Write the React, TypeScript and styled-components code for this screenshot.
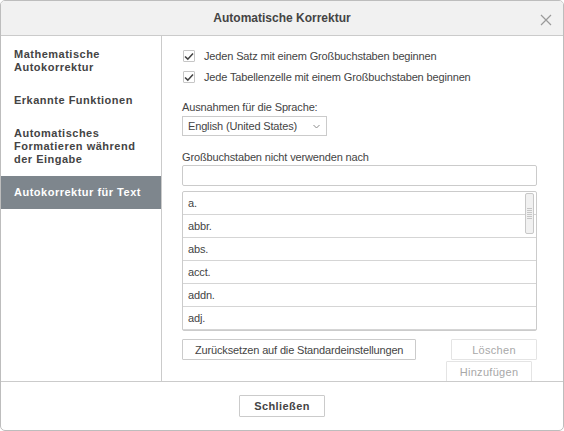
import React from 'react';
import styled, { createGlobalStyle, css } from 'styled-components';

const GlobalStyle = createGlobalStyle`
  html, body {
    margin: 0;
    padding: 0;
    background: #ffffff;
  }
  body {
    font-family: 'Liberation Sans', Arial, sans-serif;
    color: #444444;
  }
  * {
    box-sizing: border-box;
  }
`;

interface NavItemI {
  active?: boolean;
}

interface ButtonI {
  disabled?: boolean;
  shift?: number;
}

const Dialog = styled.div`
  display: flex;
  flex-direction: column;
  width: 564px;
  height: 431px;
  border: 1px solid #bdbdbd;
  border-radius: 5px;
  overflow: hidden;
  background: #ffffff;
`;

const Header = styled.header`
  position: relative;
  display: flex;
  height: 35px;
  flex-shrink: 0;
  align-items: center;
  justify-content: center;
  background: #f1f1f1;
  border-bottom: 1px solid #cbcbcb;
  font-size: 12px;
  font-weight: bold;
  color: #444444;
`;

const CloseButton = styled.span`
  position: absolute;
  right: 11px;
  top: 13px;
  width: 12px;
  height: 12px;
  display: flex;
`;

const Body = styled.div`
  display: flex;
  flex: 1;
  min-height: 0;
`;

const Sidebar = styled.nav`
  width: 161px;
  flex-shrink: 0;
  padding-top: 2px;
  border-right: 1px solid #cbcbcb;
`;

const NavItem = styled.div<NavItemI>`
  padding: 10px 13px;
  font-size: 11px;
  font-weight: bold;
  line-height: 13px;
  letter-spacing: 0.5px;
  color: #444444;
  ${({ active }) => (active && css`
    background: #7e868d;
    color: #ffffff;
  `)}
`;

const Main = styled.section`
  flex: 1;
  display: flex;
  flex-direction: column;
  padding: 12px 26px 0 20px;
  overflow: hidden;
  letter-spacing: -0.15px;
  & > * {
    flex-shrink: 0;
  }
`;

const CheckRow = styled.label`
  display: flex;
  align-items: center;
  height: 16px;
  font-size: 11px;
  margin-bottom: 5px;
`;

const CheckBox = styled.span`
  display: flex;
  width: 12px;
  height: 12px;
  margin: 0 9px 0 1px;
  border: 1px solid #c6c6c6;
  border-radius: 1px;
  align-items: center;
  justify-content: center;
`;

const FieldLabel = styled.div<{ top: number }>`
  font-size: 11px;
  line-height: 14px;
  margin-top: ${({ top }) => top}px;
`;

const Dropdown = styled.div`
  display: flex;
  width: 145px;
  height: 20px;
  margin-top: 2px;
  padding: 0 6px 0 5px;
  border: 1px solid #cbcbcb;
  align-items: center;
  justify-content: space-between;
  font-size: 11px;
`;

const TextInput = styled.div`
  height: 21px;
  margin-top: 1px;
  border: 1px solid #cbcbcb;
  border-radius: 2px;
`;

const List = styled.div`
  position: relative;
  margin-top: 5px;
  border: 1px solid #cbcbcb;
  border-radius: 2px;
`;

const ListRow = styled.div`
  height: 23px;
  padding-left: 5px;
  display: flex;
  align-items: center;
  font-size: 11px;
  border-bottom: 1px solid #d5d5d5;
  &:last-of-type {
    height: 22px;
    border-bottom: none;
  }
`;

const ScrollThumb = styled.div`
  position: absolute;
  right: 2px;
  top: 1px;
  width: 9px;
  height: 41px;
  display: flex;
  flex-direction: column;
  align-items: center;
  justify-content: center;
  gap: 1px;
  background: #f1f1f1;
  border: 1px solid #c8c8c8;
  border-radius: 2px;
  span {
    width: 5px;
    height: 1px;
    background: #c6c6c6;
  }
`;

const Actions = styled.div`
  display: flex;
  margin-top: 8px;
  justify-content: space-between;
  align-items: flex-start;
`;

const ActionColumn = styled.div`
  display: flex;
  flex-direction: column;
  align-items: flex-end;
  gap: 1px;
`;

const Button = styled.button<ButtonI>`
  height: 21px;
  padding: 0 12px;
  flex-shrink: 0;
  background: #ffffff;
  border: 1px solid #cbcbcb;
  border-radius: 1px;
  font-family: 'Liberation Sans', Arial, sans-serif;
  font-size: 11px;
  letter-spacing: -0.15px;
  color: #444444;
  ${({ disabled }) => (disabled && css`
    width: 86px;
    border-color: #e4e4e4;
    color: #a8a8a8;
    letter-spacing: 0.3px;
  `)}
  ${({ shift }) => (shift && css`
    margin-right: ${shift}px;
  `)}
`;

const Footer = styled.footer`
  display: flex;
  height: 49px;
  flex-shrink: 0;
  align-items: center;
  justify-content: center;
  border-top: 1px solid #cbcbcb;
`;

const CloseDialogButton = styled(Button)`
  width: 86px;
  height: 22px;
  font-weight: bold;
  letter-spacing: 0.4px;
`;

const Check = () => (
  <svg width="10" height="9" viewBox="0 0 10 9">
    <path d="M1 4.5 L3.8 7.2 L9 1.5" fill="none" stroke="#444" strokeWidth="1.6" />
  </svg>
);

const words = ['a.', 'abbr.', 'abs.', 'acct.', 'addn.', 'adj.'];

export default function App() {
  return (
    <>
      <GlobalStyle />
      <Dialog>
        <Header>
          Automatische Korrektur
          <CloseButton>
            <svg width="12" height="12" viewBox="0 0 12 12">
              <path d="M1 1 L11 11 M11 1 L1 11" stroke="#9a9a9a" strokeWidth="1.2" />
            </svg>
          </CloseButton>
        </Header>
        <Body>
          <Sidebar>
            <NavItem>Mathematische<br />Autokorrektur</NavItem>
            <NavItem>Erkannte Funktionen</NavItem>
            <NavItem>Automatisches<br />Formatieren während<br />der Eingabe</NavItem>
            <NavItem active>Autokorrektur für Text</NavItem>
          </Sidebar>
          <Main>
            <CheckRow>
              <CheckBox><Check /></CheckBox>
              Jeden Satz mit einem Großbuchstaben beginnen
            </CheckRow>
            <CheckRow>
              <CheckBox><Check /></CheckBox>
              Jede Tabellenzelle mit einem Großbuchstaben beginnen
            </CheckRow>
            <FieldLabel top={10}>Ausnahmen für die Sprache:</FieldLabel>
            <Dropdown>
              English (United States)
              <svg width="7" height="5" viewBox="0 0 7 5">
                <path d="M0.5 1 L3.5 4 L6.5 1" fill="none" stroke="#8a8a8a" strokeWidth="1" />
              </svg>
            </Dropdown>
            <FieldLabel top={14}>Großbuchstaben nicht verwenden nach</FieldLabel>
            <TextInput />
            <List>
              {words.map((w) => <ListRow key={w}>{w}</ListRow>)}
              <ScrollThumb>
                <span /><span /><span /><span /><span /><span />
              </ScrollThumb>
            </List>
            <Actions>
              <Button>Zurücksetzen auf die Standardeinstellungen</Button>
              <ActionColumn>
                <Button disabled>Löschen</Button>
                <Button disabled shift={5}>Hinzufügen</Button>
              </ActionColumn>
            </Actions>
          </Main>
        </Body>
        <Footer>
          <CloseDialogButton>Schließen</CloseDialogButton>
        </Footer>
      </Dialog>
    </>
  );
}
